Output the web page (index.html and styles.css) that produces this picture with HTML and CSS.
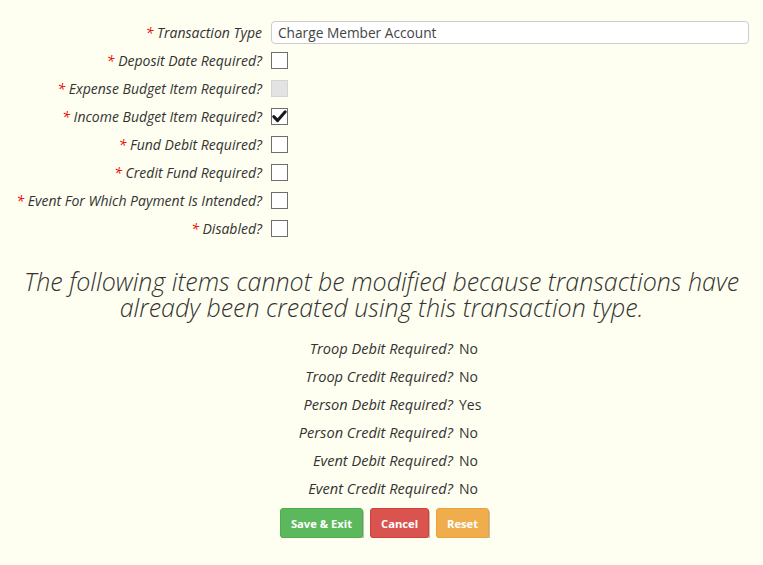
FILE: index.html
```html
<!DOCTYPE html>
<html lang="en">
<head>
  <meta charset="UTF-8" />
  <meta name="viewport" content="width=device-width, initial-scale=1.0"/>
  <title>Transaction Type</title>
  <link rel="stylesheet" href="styles.css">
</head>
<body>
  <form class="form">
    <div class="row">
      <label class="lbl"><span class="req">*</span> Transaction Type</label>
      <input class="text" type="text" value="Charge Member Account">
    </div>
    <div class="row">
      <label class="lbl"><span class="req">*</span> Deposit Date Required?</label>
      <span class="box"></span>
    </div>
    <div class="row">
      <label class="lbl"><span class="req">*</span> Expense Budget Item Required?</label>
      <span class="box disabled"></span>
    </div>
    <div class="row">
      <label class="lbl"><span class="req">*</span> Income Budget Item Required?</label>
      <span class="box"><svg width="15" height="15" viewBox="0 0 15 15"><path d="M1.8 7.6 L5.6 11.6 L13.2 2.8" fill="none" stroke="#1a1a1a" stroke-width="3" stroke-linecap="round" stroke-linejoin="round"/></svg></span>
    </div>
    <div class="row">
      <label class="lbl"><span class="req">*</span> Fund Debit Required?</label>
      <span class="box"></span>
    </div>
    <div class="row">
      <label class="lbl"><span class="req">*</span> Credit Fund Required?</label>
      <span class="box"></span>
    </div>
    <div class="row">
      <label class="lbl"><span class="req">*</span> Event For Which Payment Is Intended?</label>
      <span class="box"></span>
    </div>
    <div class="row">
      <label class="lbl"><span class="req">*</span> Disabled?</label>
      <span class="box"></span>
    </div>

    <h2 class="notice">The following items cannot be modified because transactions have already been created using this transaction type.</h2>

    <div class="ro">
      <div class="ro-row"><span class="ro-lbl">Troop Debit Required?</span><span>No</span></div>
      <div class="ro-row"><span class="ro-lbl">Troop Credit Required?</span><span>No</span></div>
      <div class="ro-row"><span class="ro-lbl">Person Debit Required?</span><span>Yes</span></div>
      <div class="ro-row"><span class="ro-lbl">Person Credit Required?</span><span>No</span></div>
      <div class="ro-row"><span class="ro-lbl">Event Debit Required?</span><span>No</span></div>
      <div class="ro-row"><span class="ro-lbl">Event Credit Required?</span><span>No</span></div>
    </div>

    <div class="actions">
      <button type="button" class="btn save">Save &amp; Exit</button>
      <button type="button" class="btn cancel">Cancel</button>
      <button type="button" class="btn reset">Reset</button>
    </div>
  </form>
</body>
</html>
```

FILE: styles.css
```css
body {
  margin: 0;
  background: #fefff0;
  font-family: "Open Sans", "Liberation Sans", sans-serif;
  font-size: 13px;
  color: #333;
}
.form { padding-top: 18px; }
.row {
  display: grid;
  grid-template-columns: 262px 1fr;
  column-gap: 9px;
  align-items: center;
  height: 28px;
  padding-right: 14px;
}
.lbl {
  text-align: right;
  font-style: italic;
  font-size: 14px;
  white-space: nowrap;
}
.req { color: #e00; }
.text {
  height: 23px;
  box-sizing: border-box;
  border: 1px solid #ccc;
  border-radius: 4px;
  background: #fff;
  padding: 0 6px;
  font-family: inherit;
  font-size: 13.7px;
  color: #444;
}
.box {
  width: 17px;
  height: 17px;
  box-sizing: border-box;
  border: 1px solid #6e6e6e;
  background: #fff;
  display: flex;
  align-items: center;
  justify-content: center;
}
.box.disabled { background: #e3e3e3; border-color: #d4d4d4; }
.notice {
  margin: 26px 10px 14px;
  text-align: center;
  font-weight: 300;
  font-style: italic;
  font-size: 25px;
  line-height: 26px;
  color: #333;
}
.ro-row {
  display: grid;
  grid-template-columns: 453px 1fr;
  column-gap: 6px;
  align-items: center;
  height: 28px;
  font-size: 14px;
}
.ro-lbl {
  text-align: right;
  font-style: italic;
  font-size: 14.6px;
}
.actions {
  display: flex;
  justify-content: center;
  gap: 7px;
  margin-top: 6px;
  padding-left: 6px;
}
.btn {
  height: 30px;
  padding: 0 10px;
  border: 1px solid;
  border-radius: 3px;
  color: #fff;
  font-family: inherit;
  font-weight: bold;
  font-size: 11.2px;
  box-shadow: 1px 2px 0 rgba(0,0,0,0.25);
}
.save { background: #5cb85c; border-color: #4cae4c; }
.cancel { background: #d9534f; border-color: #d43f3a; }
.reset { background: #f0ad4e; border-color: #eea236; }
```
